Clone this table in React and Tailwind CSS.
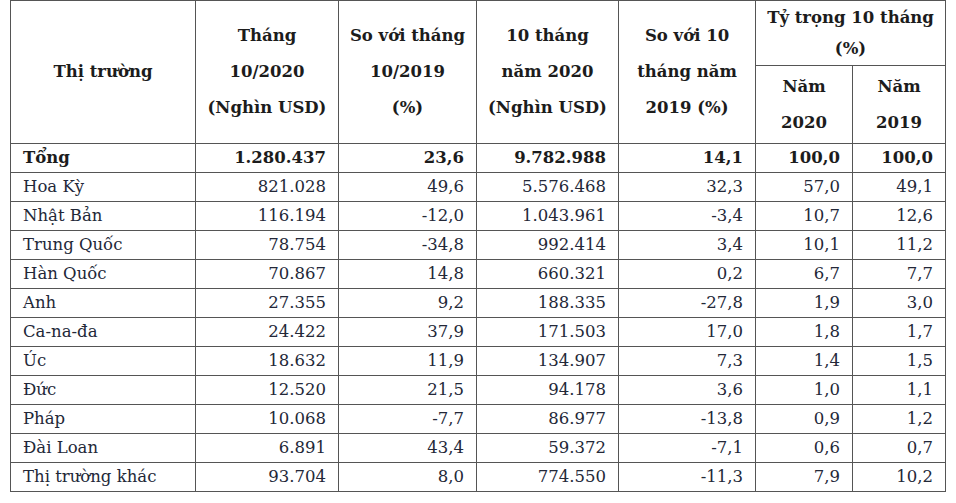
const rows = [
  ['Hoa Kỳ', '821.028', '49,6', '5.576.468', '32,3', '57,0', '49,1'],
  ['Nhật Bản', '116.194', '-12,0', '1.043.961', '-3,4', '10,7', '12,6'],
  ['Trung Quốc', '78.754', '-34,8', '992.414', '3,4', '10,1', '11,2'],
  ['Hàn Quốc', '70.867', '14,8', '660.321', '0,2', '6,7', '7,7'],
  ['Anh', '27.355', '9,2', '188.335', '-27,8', '1,9', '3,0'],
  ['Ca-na-đa', '24.422', '37,9', '171.503', '17,0', '1,8', '1,7'],
  ['Úc', '18.632', '11,9', '134.907', '7,3', '1,4', '1,5'],
  ['Đức', '12.520', '21,5', '94.178', '3,6', '1,0', '1,1'],
  ['Pháp', '10.068', '-7,7', '86.977', '-13,8', '0,9', '1,2'],
  ['Đài Loan', '6.891', '43,4', '59.372', '-7,1', '0,6', '0,7'],
  ['Thị trường khác', '93.704', '8,0', '774.550', '-11,3', '7,9', '10,2'],
];

const th = 'border border-[#555] text-center align-middle font-bold text-[#1c1c1c] leading-[36px] p-0';
const td = 'border border-[#555] px-3 py-0 text-right leading-[28px]';

export default function App() {
  return (
    <div className="w-[956px] h-[503px] bg-white pl-[10px] font-['DejaVu_Serif',serif] text-[16.5px]">
      <table className="w-[935px] table-fixed border-collapse">
        <colgroup>
          <col className="w-[185px]" />
          <col className="w-[143px]" />
          <col className="w-[138px]" />
          <col className="w-[142px]" />
          <col className="w-[137px]" />
          <col className="w-[97px]" />
          <col className="w-[93px]" />
        </colgroup>
        <thead>
          <tr className="h-[65px]">
            <th rowSpan={2} className={th}>Thị trường</th>
            <th rowSpan={2} className={th}>Tháng<br />10/2020<br />(Nghìn USD)</th>
            <th rowSpan={2} className={th}>So với tháng<br />10/2019<br />(%)</th>
            <th rowSpan={2} className={th}>10 tháng<br />năm 2020<br />(Nghìn USD)</th>
            <th rowSpan={2} className={th}>So với 10<br />tháng năm<br />2019 (%)</th>
            <th colSpan={2} className={`${th} !leading-[31px]`}>Tỷ trọng 10 tháng<br />(%)</th>
          </tr>
          <tr className="h-[78px]">
            <th className={th}>Năm<br />2020</th>
            <th className={th}>Năm<br />2019</th>
          </tr>
        </thead>
        <tbody>
          <tr className="h-[29px] font-bold text-[#1c1c1c]">
            <td className="border border-[#555] px-3 py-0 text-left leading-[28px]">Tổng</td>
            <td className={td}>1.280.437</td>
            <td className={td}>23,6</td>
            <td className={td}>9.782.988</td>
            <td className={td}>14,1</td>
            <td className={td}>100,0</td>
            <td className={td}>100,0</td>
          </tr>
          {rows.map((r) => (
            <tr key={r[0]} className="h-[29px] text-[#232838]">
              <td className="border border-[#555] px-3 py-0 text-left leading-[28px]">{r[0]}</td>
              {r.slice(1).map((v, i) => (
                <td key={i} className={td}>{v}</td>
              ))}
            </tr>
          ))}
        </tbody>
      </table>
    </div>
  );
}
